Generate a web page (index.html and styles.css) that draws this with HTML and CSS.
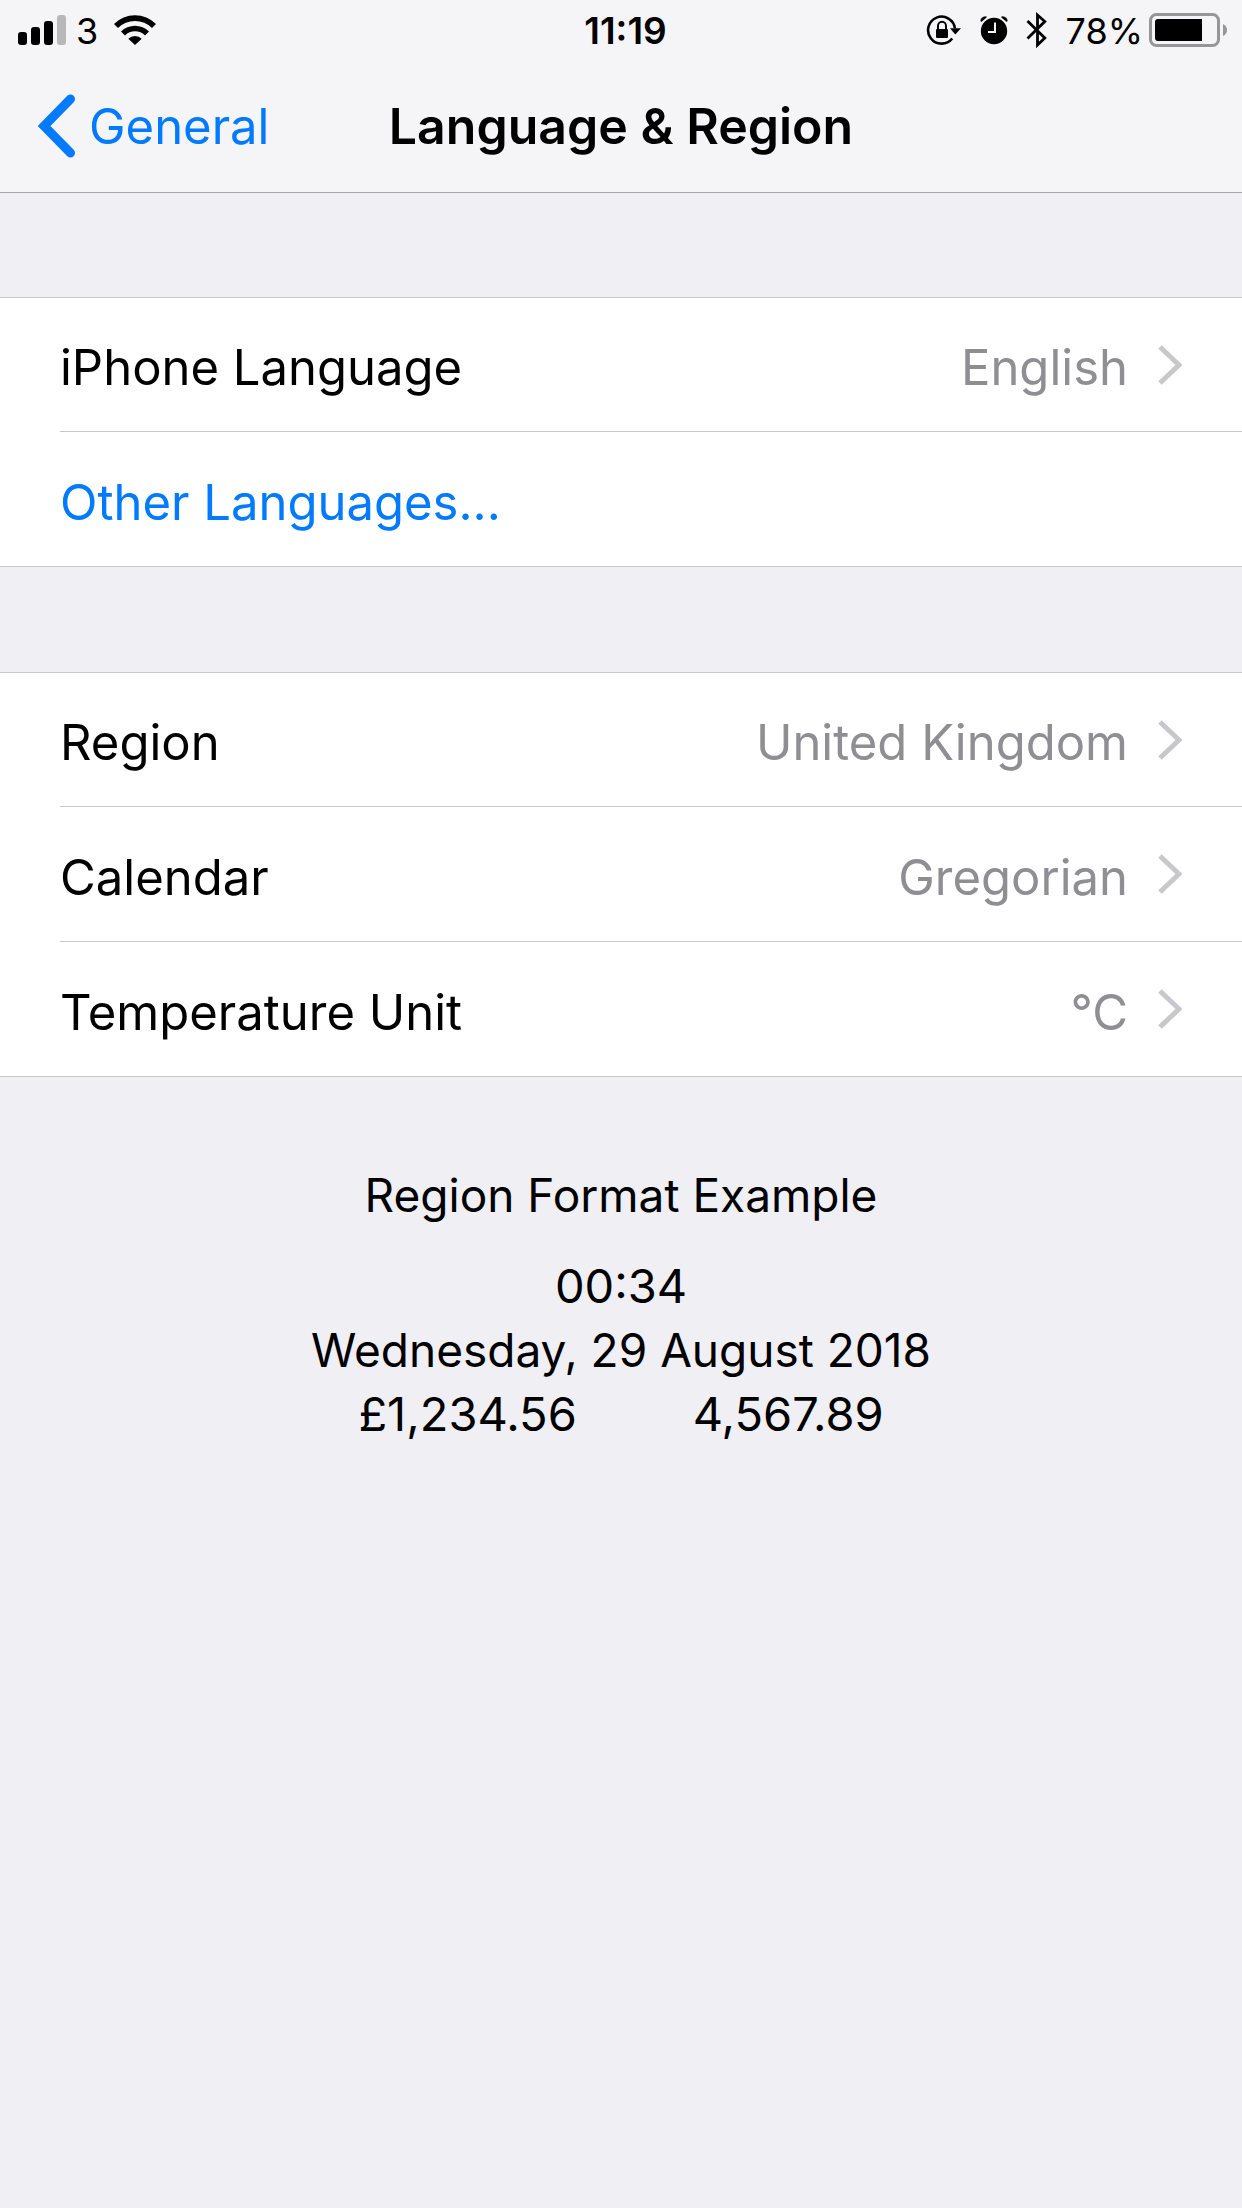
FILE: index.html
```html
<!DOCTYPE html>
<html lang="en-GB">
<head>
<meta charset="utf-8">
<meta name="viewport" content="width=device-width, initial-scale=1">
<title>Language &amp; Region</title>
<link rel="stylesheet" href="styles.css">
</head>
<body>
<header class="top">
  <div class="status">
    <div class="status-side">
      <svg class="signal" width="48" height="30" viewBox="0 0 48 30" role="img" aria-label="Signal strength">
        <rect x="0" y="17" width="9" height="13" rx="3"/>
        <rect x="13" y="12" width="9" height="18" rx="3"/>
        <rect x="26" y="6" width="9" height="24" rx="3"/>
        <rect x="39" y="0" width="9" height="30" rx="3" fill="#b8b8b9"/>
      </svg>
      <span class="carrier">3</span>
      <svg class="wifi" width="42" height="30" viewBox="0 0 42 30" role="img" aria-label="Wi-Fi">
        <path d="M0 9A29.600 29.600 0 0 1 42 9L38 13A24 24 0 0 0 4 13Z"/>
        <path d="M7 16.500A19.800 19.800 0 0 1 35 16.500L31 20.500A14 14 0 0 0 11 20.500Z"/>
        <path d="M14.300 23.800A9.500 9.500 0 0 1 27.700 23.800L21 30Z"/>
      </svg>
    </div>
    <time class="clock">11:19</time>
    <div class="status-side status-end">
      <svg class="lock" width="36" height="32" viewBox="0 0 36 32" role="img" aria-label="Orientation lock">
        <path d="M29 14.500A13.500 13.500 0 1 0 26.200 24.500" fill="none" stroke="#000" stroke-width="2.600"/>
        <path d="M24 14.300H35L29.300 20.500Z"/>
        <rect x="10" y="15" width="12" height="9" rx="1"/>
        <path d="M12 16V12a4 4.200 0 0 1 8 0V16" fill="none" stroke="#000" stroke-width="2"/>
      </svg>
      <svg class="alarm" width="28" height="30" viewBox="0 0 28 30" role="img" aria-label="Alarm">
        <circle cx="14" cy="16" r="13.200"/>
        <path d="M0 6Q1 1 6.500 1L7 2.500L1.500 7Z M28 6Q27 1 21.500 1L21 2.500L26.500 7Z" stroke="#f5f5f7" stroke-width=".5"/>
        <path d="M15 7.500V17H8" fill="none" stroke="#f5f5f7" stroke-width="2"/>
      </svg>
      <svg class="bluetooth" width="22" height="38" viewBox="0 0 22 38" role="img" aria-label="Bluetooth">
        <path d="M1.500 10L18.800 27L11.500 34V4L18.800 10.500L1.500 27.500" fill="none" stroke="#000" stroke-width="2.800"/>
      </svg>
      <span class="percent">78%</span>
      <svg class="battery" width="78" height="34" viewBox="0 0 78 34" role="img" aria-label="Battery">
        <rect x="1.500" y="1.500" width="68" height="31" rx="6" fill="none" stroke="#969697" stroke-width="3"/>
        <path d="M53 6H9Q6 6 6 9V25Q6 28 9 28H53Z"/>
        <path d="M74 11Q78 13 78 17Q78 21 74 23Z" fill="#969697"/>
      </svg>
    </div>
  </div>
  <nav class="navbar">
    <a class="back" href="#general">
      <svg width="37" height="64" viewBox="0 0 37 64" aria-hidden="true"><path d="M32.500 5L6 32L32.500 59" fill="none" stroke="#007aff" stroke-width="9" stroke-linecap="round"/></svg>
      <span class="back-label">General</span>
    </a>
    <h1 class="title">Language &amp; Region</h1>
  </nav>
</header>
<main>
  <ul class="group">
    <li class="item"><a class="row" href="#language"><span class="text">iPhone Language</span><span class="text value">English</span><svg class="chevron" width="24" height="40" viewBox="0 0 24 40" aria-hidden="true"><path d="M2 2L21 20L2 38"/></svg></a></li>
    <li class="item"><a class="row action" href="#other"><span class="text">Other Languages...</span></a></li>
  </ul>
  <ul class="group">
    <li class="item"><a class="row" href="#region"><span class="text">Region</span><span class="text value">United Kingdom</span><svg class="chevron" width="24" height="40" viewBox="0 0 24 40" aria-hidden="true"><path d="M2 2L21 20L2 38"/></svg></a></li>
    <li class="item"><a class="row" href="#calendar"><span class="text">Calendar</span><span class="text value">Gregorian</span><svg class="chevron" width="24" height="40" viewBox="0 0 24 40" aria-hidden="true"><path d="M2 2L21 20L2 38"/></svg></a></li>
    <li class="item"><a class="row" href="#temperature"><span class="text">Temperature Unit</span><span class="text value">°C</span><svg class="chevron" width="24" height="40" viewBox="0 0 24 40" aria-hidden="true"><path d="M2 2L21 20L2 38"/></svg></a></li>
  </ul>
  <section class="example">
    <h2 class="example-title">Region Format Example</h2>
    <p class="figures">00:34</p>
    <p>Wednesday, 29 August 2018</p>
    <p class="figures amounts"><span>£1,234.56</span><span>4,567.89</span></p>
  </section>
</main>
</body>
</html>
```
FILE: styles.css
```css
* { box-sizing: border-box; }

body {
  margin: 0;
  min-height: 100vh;
  background: #efeff4;
  color: #000;
  font-family: Inter, "Liberation Sans", sans-serif;
  font-size: 49px;
  line-height: 60px;
}

a { color: inherit; text-decoration: none; }
h1, h2, p, ul { margin: 0; padding: 0; }
svg { display: block; flex: none; }

.top {
  background: #f5f5f7;
  border-bottom: 1px solid #a8a7ac;
}

.status {
  display: grid;
  grid-template-columns: 1fr auto 1fr;
  align-items: center;
  height: 60px;
  padding: 0 15px 0 18px;
  font-size: 36px;
  line-height: 44px;
}

.status-side { display: flex; align-items: center; }
.status-end { justify-content: flex-end; }
.carrier { margin: 2px 16px 0 10px; }

.clock {
  padding: 2px 0 0 6px;
  font-size: 37px;
  font-weight: 600;
  font-kerning: none;
}

.percent { margin: 2px 6px 0 18px; }
.alarm { margin: 0 18px; }

.navbar {
  display: grid;
  grid-template-columns: 1fr auto 1fr;
  align-items: center;
  height: 132px;
  padding: 0 38px;
}

.back {
  display: flex;
  align-items: center;
  gap: 14px;
  color: #007aff;
}

.back-label { padding-top: 2px; }
.title { font-size: 50px; font-weight: 600; }

.group {
  list-style: none;
  margin-top: 104px;
  background: #fff;
  border: solid #c8c7cc;
  border-width: 1px 0;
}

.group + .group { margin-top: 105px; }
.item { padding-left: 60px; }

.row {
  display: flex;
  align-items: center;
  min-height: 133px;
  padding-right: 60px;
}

.item + .item .row {
  min-height: 135px;
  border-top: 1px solid #c8c7cc;
}

.text { padding-top: 7px; }
.value { margin-left: auto; padding-right: 30px; color: #8e8e93; }
.action { color: #007aff; }

.chevron {
  fill: none;
  stroke: #c7c7cc;
  stroke-width: 5px;
}

.example {
  padding: 86px 24px;
  font-size: 46px;
  line-height: 64px;
  text-align: center;
}

.example-title {
  margin-bottom: 27px;
  font-size: 46px;
  font-weight: 400;
}

.figures { font-size: 47px; }
.amounts { display: flex; justify-content: center; gap: 116px; }
```
